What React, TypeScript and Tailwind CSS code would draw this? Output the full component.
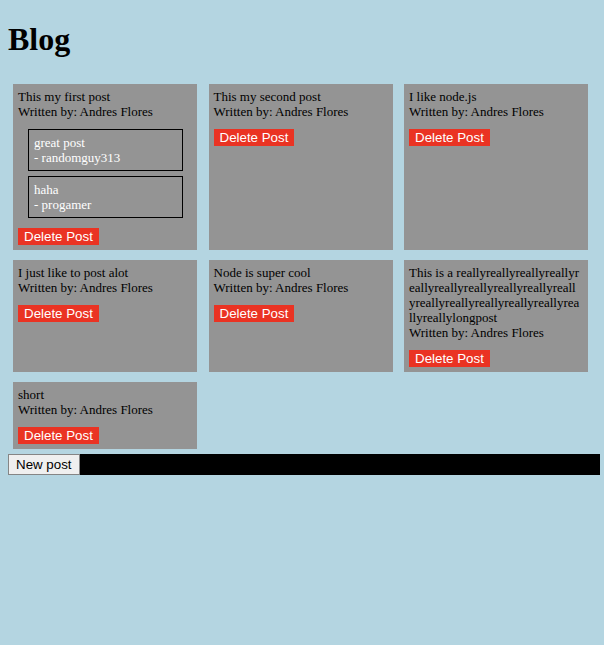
import React from 'react';

type Comment = { text: string; author: string };
type Post = { id: number; title: string; author: string; comments: Comment[] };

const posts: Post[] = [
  {
    id: 1,
    title: 'This my first post',
    author: 'Andres Flores',
    comments: [
      { text: 'great post', author: 'randomguy313' },
      { text: 'haha', author: 'progamer' },
    ],
  },
  { id: 2, title: 'This my second post', author: 'Andres Flores', comments: [] },
  { id: 3, title: 'I like node.js', author: 'Andres Flores', comments: [] },
  { id: 4, title: 'I just like to post alot', author: 'Andres Flores', comments: [] },
  { id: 5, title: 'Node is super cool', author: 'Andres Flores', comments: [] },
  {
    id: 6,
    title:
      'This is a reallyreallyreallyreallyreallyreallyreallyreallyreallyreallyreallyreallyreallyreallyreallyreallyreallylongpost',
    author: 'Andres Flores',
    comments: [],
  },
  { id: 7, title: 'short', author: 'Andres Flores', comments: [] },
];

const serif = "font-['Liberation_Serif','Times_New_Roman',serif]";
const sans = "font-['Liberation_Sans',Arial,sans-serif]";

const PostCard: React.FC<{ post: Post }> = ({ post }) => (
  <div className={`bg-[#949494] pl-[5px] pr-[7px] pt-[5px] pb-[5px] text-[13px] leading-[15px] text-black ${serif}`}>
    <div className="break-all">{post.title}</div>
    <div>Written by: {post.author}</div>

    {post.comments.length > 0 && (
      <div className="mt-[10px] flex flex-col gap-[5px]">
        {post.comments.map((c, i) => (
          <div key={i} className="ml-[10px] w-[155px] border border-black p-[5px] text-white">
            <div>{c.text}</div>
            <div>- {c.author}</div>
          </div>
        ))}
      </div>
    )}

    <button
      className={`mt-[10px] block h-[17px] bg-[#ea3323] px-[6px] py-[1px] text-[13.333px] leading-[15px] text-white ${sans}`}
    >
      Delete Post
    </button>
  </div>
);

const App: React.FC = () => {
  return (
    <div className="min-h-[645px] bg-[#b4d5e1] px-[8px] pt-[21px]">
      <h1 className={`mb-[21px] text-[32px] font-bold leading-[37px] text-black ${serif}`}>Blog</h1>

      {/* Posts grid */}
      <div className="grid grid-cols-[184px_184px_184px] gap-x-[11.5px] gap-y-[10px] p-[5px]">
        {posts.map((post) => (
          <PostCard key={post.id} post={post} />
        ))}
      </div>

      {/* New post bar */}
      <div className="flex w-[592px] bg-black">
        <button
          className={`h-[21px] border border-[#858585] bg-[#efefef] px-[7px] py-[1px] text-[13.333px] leading-[15px] text-black ${sans}`}
        >
          New post
        </button>
      </div>
    </div>
  );
};

export default App;
